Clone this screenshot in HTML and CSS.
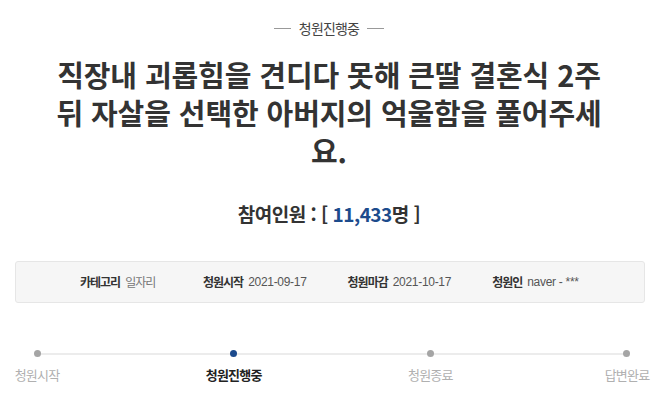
FILE: index.html
```html
<!DOCTYPE html>
<html lang="ko">
<head>
<meta charset="utf-8">
<link rel="stylesheet" href="styles.css">
</head>
<body>
<main class="page">
  <div class="status">
    <span class="status-line"></span>
    <span class="status-text">청원진행중</span>
    <span class="status-line"></span>
  </div>
  <h1 class="title">직장내 괴롭힘을 견디다 못해 큰딸 결혼식 2주 뒤 자살을 선택한 아버지의 억울함을 풀어주세요.</h1>
  <p class="count">참여인원 : [ <span class="count-num">11,433</span>명 ]</p>
  <ul class="info">
    <li class="info-item first"><span class="info-key">카테고리</span><span class="info-val">일자리</span></li>
    <li class="info-item"><span class="info-key">청원시작</span><span class="info-val num">2021-09-17</span></li>
    <li class="info-item"><span class="info-key">청원마감</span><span class="info-val num">2021-10-17</span></li>
    <li class="info-item"><span class="info-key">청원인</span><span class="info-val num">naver - ***</span></li>
  </ul>
  <ol class="progress">
    <li class="step"><span class="dot"></span><span class="step-label">청원시작</span></li>
    <li class="step active"><span class="dot"></span><span class="step-label">청원진행중</span></li>
    <li class="step"><span class="dot"></span><span class="step-label">청원종료</span></li>
    <li class="step"><span class="dot"></span><span class="step-label">답변완료</span></li>
  </ol>
</main>
</body>
</html>
```
FILE: styles.css
```css
* { box-sizing: border-box; }
html, body { margin: 0; padding: 0; background: #fff; }
body {
  font-family: "Noto Sans CJK KR", "Noto Sans", sans-serif;
  color: #333;
  width: 658px;
  height: 415px;
  overflow: hidden;
}
.page { display: flex; flex-direction: column; align-items: stretch; }

.status {
  display: flex;
  justify-content: center;
  align-items: center;
  gap: 8px;
  margin-top: 17px;
  height: 22px;
}
.status-line { width: 17px; height: 1px; background: #999; }
.status-text { font-size: 14px; color: #444; letter-spacing: -0.8px; line-height: 22px; }

.title {
  margin: 16px auto 0;
  width: 566px;
  text-align: center;
  font-size: 29px;
  line-height: 38px;
  font-weight: 700;
  letter-spacing: -0.1px;
  color: #333;
}

.count {
  margin: 32px 0 0;
  text-align: center;
  font-size: 19px;
  line-height: 26px;
  font-weight: 700;
  letter-spacing: -0.5px;
  color: #333;
}
.count-num { color: #1c4b8c; }

.info {
  list-style: none;
  margin: 34px 13px 0 15px;
  padding: 0 0 0 64px;
  height: 42px;
  display: flex;
  align-items: center;
  gap: 41px;
  background: #f6f6f6;
  border: 1px solid #e6e6e6;
  border-radius: 3px;
}
.info-item { display: flex; align-items: center; gap: 5px; font-size: 12px; line-height: 16px; }
.info-item.first { min-width: 82px; }
.info-key { font-weight: 700; color: #333; letter-spacing: -1px; }
.info-val { color: #777; letter-spacing: -1px; }
.info-val.num { color: #555; letter-spacing: -0.3px; font-family: "Liberation Sans", sans-serif; font-size: 12px; }

.progress {
  list-style: none;
  margin: 47px 31px 0 37px;
  padding: 0;
  display: flex;
  justify-content: space-between;
  position: relative;
}
.progress::before {
  content: "";
  position: absolute;
  left: 0;
  right: 0;
  top: 3px;
  height: 2px;
  background: #ececec;
}
.step {
  width: 0;
  display: flex;
  flex-direction: column;
  align-items: center;
  position: relative;
}
.dot { width: 7px; height: 7px; border-radius: 50%; background: #a5a5a5; flex: none; }
.step-label {
  margin-top: 9px;
  font-size: 13px;
  line-height: 18px;
  white-space: nowrap;
  color: #b0b0b0;
  letter-spacing: -0.8px;
}
.step.active .dot { background: #1b4a8c; }
.step.active .step-label { color: #222; font-weight: 700; }
```
